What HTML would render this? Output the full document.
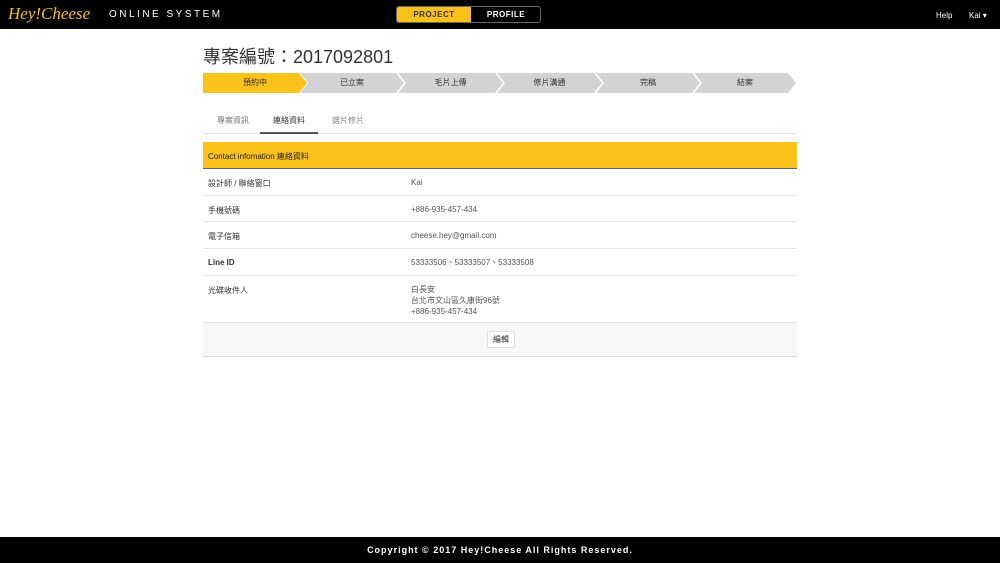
<!DOCTYPE html><html><head><meta charset="utf-8"><style>
*{margin:0;padding:0;box-sizing:border-box}
body{width:1000px;height:563px;background:#fff;font-family:"Liberation Sans","Noto Sans CJK TC",sans-serif;position:relative;overflow:hidden;color:#333}
.top{position:absolute;left:0;top:0;width:1000px;height:29px;background:#000}
.logo{position:absolute;left:8px;top:4px;color:#f5c11a;font-family:"Liberation Serif",serif;font-style:italic;font-size:17px}
.sys{position:absolute;left:109px;top:9px;color:#fff;font-size:10px;letter-spacing:2.5px}
.seg{position:absolute;left:396px;top:6px;width:145px;height:17px;border:1px solid #666;border-radius:3px;overflow:hidden;font-size:8px;font-weight:bold;letter-spacing:.5px}
.seg div{position:absolute;top:0;height:15px;line-height:15px;text-align:center}
.title{position:absolute;left:203px;top:43px;font-size:18px;color:#333}
.step{position:absolute;top:73px;height:20px;line-height:20px;font-size:8px;text-align:center;color:#333;background:#d3d3d3;clip-path:polygon(0 0,calc(100% - 8px) 0,100% 50%,calc(100% - 8px) 100%,0 100%,8px 50%)}
.tabs{position:absolute;left:203px;top:110px;width:594px;height:24px;border-bottom:1px solid #e6e6e6;font-size:8px}
.tabs span{position:absolute;top:5px}
.row{position:absolute;left:203px;width:594px;border-bottom:1px solid #e6e6e6;font-size:8px}
.row .l{position:absolute;left:5px;top:9px}
.row .v{position:absolute;left:208px;top:8px;color:#555;line-height:11px}
.foot{position:absolute;left:0;top:537px;width:1000px;height:26px;background:#000;color:#fff;font-size:9px;font-weight:bold;letter-spacing:1px;text-align:center;line-height:26px}
</style></head><body>
<div class="top">
<div class="logo">Hey!Cheese</div>
<div class="sys">ONLINE SYSTEM</div>
<div class="seg"><div style="left:0;width:74px;background:#f9c11a;color:#333">PROJECT</div><div style="left:74px;width:70px;color:#fff">PROFILE</div></div>
<div style="position:absolute;left:936px;top:11px;color:#fff;font-size:8px">Help</div>
<div style="position:absolute;left:969px;top:11px;color:#fff;font-size:8px">Kai ▾</div>
</div>
<div class="title">專案編號：2017092801</div>
<div class="step" style="left:203px;width:104px;background:#fbc21b;clip-path:polygon(0 0,calc(100% - 8px) 0,100% 50%,calc(100% - 8px) 100%,0 100%)">預約中</div>
<div class="step" style="left:300px;width:104px">已立案</div>
<div class="step" style="left:398px;width:105px">毛片上傳</div>
<div class="step" style="left:497px;width:105px">修片溝通</div>
<div class="step" style="left:596px;width:104px">完稿</div>
<div class="step" style="left:694px;width:102px">結案</div>
<div class="tabs"><span style="left:14px;color:#777">專案資訊</span><span style="left:70px">連絡資料</span><span style="left:129px;color:#888">選片修片</span>
<div style="position:absolute;left:57px;top:22px;width:58px;height:2px;background:#555"></div></div>
<div class="row" style="top:142px;height:27px;background:#fbc21b;border-bottom:1px solid #666"><span class="l" style="top:9px;color:#222">Contact infomation 連絡資料</span></div>
<div class="row" style="top:169px;height:27px"><span class="l">設計師 / 聯絡窗口</span><span class="v">Kai</span></div>
<div class="row" style="top:196px;height:26px"><span class="l">手機號碼</span><span class="v">+886-935-457-434</span></div>
<div class="row" style="top:222px;height:27px"><span class="l">電子信箱</span><span class="v">cheese.hey@gmail.com</span></div>
<div class="row" style="top:249px;height:27px"><span class="l" style="font-weight:bold">Line ID</span><span class="v">53333506、53333507、53333508</span></div>
<div class="row" style="top:276px;height:47px"><span class="l">光碟收件人</span><span class="v">白長安<br>台北市文山區久康街96號<br>+886-935-457-434</span></div>
<div class="row" style="top:323px;height:34px;background:#f7f7f7;border-bottom:1px solid #ddd"><div style="position:absolute;left:284px;top:8px;width:28px;height:17px;background:#fff;border:1px solid #ddd;border-radius:2px;font-size:8px;text-align:center;line-height:15px">編輯</div></div>
<div class="foot">Copyright © 2017 Hey!Cheese All Rights Reserved.</div>
</body></html>
